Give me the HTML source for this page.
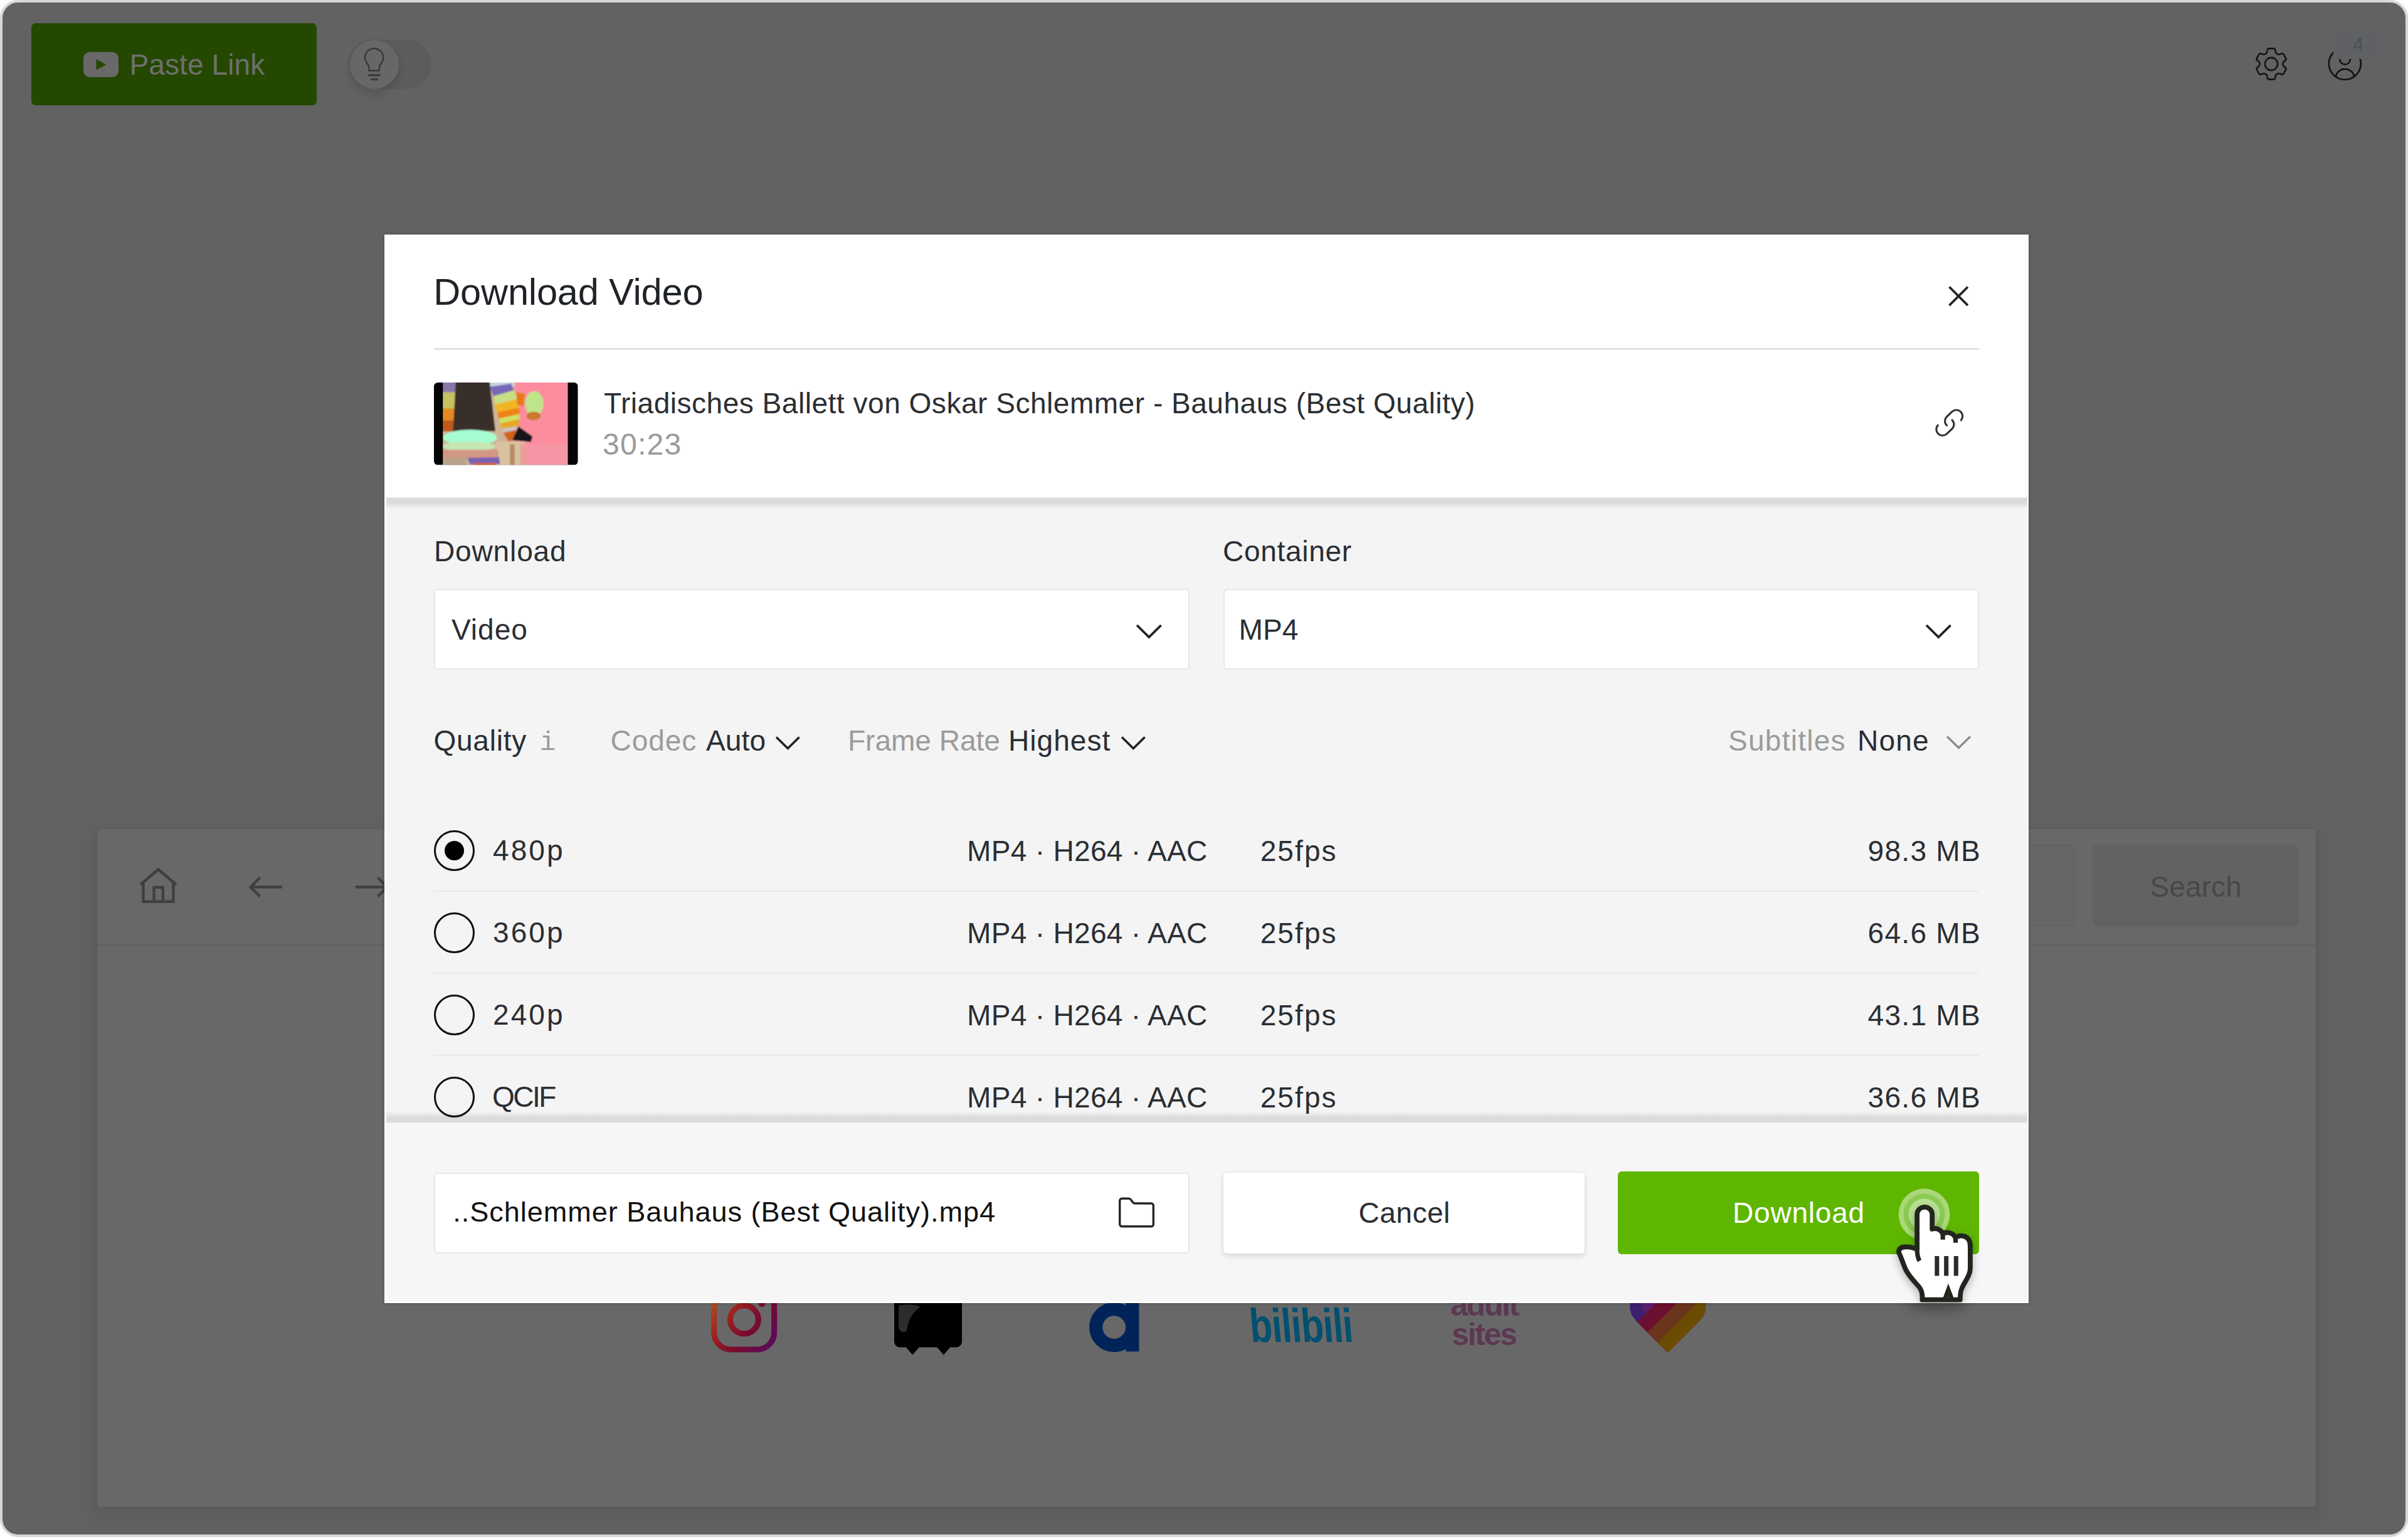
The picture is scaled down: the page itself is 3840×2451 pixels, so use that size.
<!DOCTYPE html>
<html lang="en">
<head>
<meta charset="utf-8">
<title>Download Video</title>
<style>
*{box-sizing:border-box;margin:0;padding:0}
html,body{width:3840px;height:2451px;overflow:hidden;background:#fff}
body{position:relative;font-family:"Liberation Sans",sans-serif;color:#2a2e33}
.abs{position:absolute}
.t{position:absolute;white-space:nowrap;line-height:1;font-size:46px}
svg{position:absolute;overflow:visible}
.win{position:absolute;left:0;top:0;width:3840px;height:2451px;border:4.5px solid #d7d7d7;border-radius:29px;background:#626262;overflow:hidden}
/* top bar */
.paste{position:absolute;left:49.5px;top:36.6px;width:455.5px;height:131px;border-radius:7px;background:#254800}
.track{position:absolute;left:556px;top:62.5px;width:132px;height:79px;border-radius:40px;background:#5c5c5c}
.knob{position:absolute;left:557.8px;top:63.5px;width:78px;height:78px;border-radius:50%;background:#676767;box-shadow:0 10px 10px 2px rgba(0,0,0,.075),0 0 6px rgba(0,0,0,.07)}
.badge{position:absolute;left:3721px;top:47px;width:79px;height:47px;background:#5f6165}
.badge .t{left:31px;top:8.5px;font-size:31px;color:#4a5056}
/* browser card */
.card{position:absolute;left:155px;top:1322px;width:3538px;height:1081px;border-radius:5px;background:#686868;box-shadow:0 14px 28px 6px rgba(0,0,0,.07),0 0 10px rgba(0,0,0,.05)}
.card .bar{position:absolute;left:0;top:0;width:100%;height:185.7px;border-bottom:2.6px solid #606060}
.url{position:absolute;left:2400px;top:1348px;width:908px;height:129px;border:1.6px solid #5e5e5e;border-radius:8px;background:#676767}
.search{position:absolute;left:3337px;top:1347px;width:329px;height:131px;border-radius:8px;background:#626262}
.search .t{left:91.5px;top:43.5px;font-size:46px;letter-spacing:.1px;color:#484848}

/* modal */
.modal{position:absolute;left:613px;top:374px;width:2621.5px;height:1704px;background:#fff;box-shadow:0 0 5px rgba(0,0,0,.25)}
.mbody{position:absolute;left:615.5px;top:793px;width:2617.3px;height:997px;background:#f4f4f4}
.shd{position:absolute;left:615.5px;width:2617.3px;height:18px}
.mhead{position:absolute;left:613px;top:374px;width:2621.5px;height:419px;background:#fff}
.mfoot{position:absolute;left:615.5px;top:1789.7px;width:2617.3px;height:285.7px;background:#f6f6f6}
.hr{position:absolute;left:692px;top:554.5px;width:2464px;height:3px;background:#e2e2e2}
.sel{position:absolute;top:939px;width:1205px;height:129px;border:2.5px solid #e6e6e6;border-radius:6px;background:#fff}
.g{color:#9b9b9b}
.row{position:absolute;left:692px;width:2464px;height:130.5px}
.row.ln{border-bottom:2.5px solid #e9e9e9}
.radio{position:absolute;left:0;top:32.5px;width:65px;height:65px;border-radius:50%;border:3.3px solid #111}
.radio.on:after{content:"";position:absolute;left:13.7px;top:13.7px;width:31px;height:31px;border-radius:50%;background:#000}
.fname{position:absolute;left:692px;top:1869.5px;width:1205px;height:129px;border:2.5px solid #e6e6e6;border-radius:6px;background:#fff}
.btnc{position:absolute;left:1951px;top:1870px;width:576px;height:129px;border-radius:6px;background:#fff;box-shadow:0 4px 10px rgba(0,0,0,.13),0 0 3px rgba(0,0,0,.06)}
.btnd{position:absolute;left:2579.5px;top:1868px;width:576.5px;height:132px;border-radius:6px;background:#5fb600}
</style>
</head>
<body>
<div class="win">
</div>

<header><!-- ===== top bar ===== -->
<div class="paste">
  <svg style="left:83.5px;top:46px" width="56" height="40" viewBox="0 0 56 40"><rect x="0" y="0" width="56" height="40" rx="10" fill="#696969"/><path d="M20.5,11.5 L36.5,20 L20.5,28.5Z" fill="#254800"/></svg>
</div>
<div class="t" style="left:206.5px;top:79.8px;font-size:46px;letter-spacing:.1px;color:#6e706e">Paste Link</div>
<div class="track"></div>
<div class="knob"></div>
<svg style="left:570px;top:70px" width="54" height="64" viewBox="570 70 54 64" fill="none" stroke="#3b3b3b" stroke-width="2.6" stroke-linecap="butt" stroke-linejoin="round">
  <path d="M588.25,112.6 V106.8 C588.25,102.6 581.9,99.6 581.9,92 A14.7,14.7 0 0 1 611.3,92 C611.3,99.6 604.95,102.6 604.95,106.8 V112.6 Z"/>
  <path d="M587,119.8h19.6M590.8,126.6h12.2" stroke-width="3.2"/>
</svg>
<svg style="left:3589.5px;top:70.2px" width="64" height="64" viewBox="-32 -32 64 64" fill="none" stroke="#141414" stroke-width="2.6" stroke-linejoin="round">
  <path d="M9.13,-16.00Q6.97,-17.25 6.61,-19.72L6.26,-22.13Q5.91,-24.60 3.41,-24.60L-3.41,-24.60Q-5.91,-24.60 -6.26,-22.13L-6.61,-19.72Q-6.97,-17.25 -9.13,-16.00L-9.29,-15.91Q-11.45,-14.66 -13.77,-15.58L-16.03,-16.49Q-18.35,-17.42 -19.60,-15.25L-23.01,-9.35Q-24.26,-7.19 -22.29,-5.64L-20.38,-4.14Q-18.42,-2.59 -18.42,-0.09L-18.42,0.09Q-18.42,2.59 -20.38,4.14L-22.29,5.64Q-24.26,7.19 -23.01,9.35L-19.60,15.25Q-18.35,17.42 -16.03,16.49L-13.77,15.58Q-11.45,14.66 -9.29,15.91L-9.13,16.00Q-6.97,17.25 -6.61,19.72L-6.26,22.13Q-5.91,24.60 -3.41,24.60L3.41,24.60Q5.91,24.60 6.26,22.13L6.61,19.72Q6.97,17.25 9.13,16.00L9.29,15.91Q11.45,14.66 13.77,15.58L16.03,16.49Q18.35,17.42 19.60,15.25L23.01,9.35Q24.26,7.19 22.29,5.64L20.38,4.14Q18.42,2.59 18.42,0.09L18.42,-0.09Q18.42,-2.59 20.38,-4.14L22.29,-5.64Q24.26,-7.19 23.01,-9.35L19.60,-15.25Q18.35,-17.42 16.03,-16.49L13.77,-15.58Q11.45,-14.66 9.29,-15.91Z"/>
  <circle cx="0" cy="0" r="10.1"/>
</svg>
<svg style="left:3709px;top:72px" width="60" height="60" viewBox="3709 72 60 60" fill="none" stroke="#141414" stroke-width="2.7">
  <defs><clipPath id="uc"><circle cx="3739.3" cy="101.5" r="25.5"/></clipPath></defs>
  <circle cx="3739.3" cy="101.5" r="25.5"/>
  <circle cx="3739.5" cy="94.4" r="8.4"/>
  <ellipse cx="3739.5" cy="123.5" rx="14.6" ry="13.3" clip-path="url(#uc)"/>
</svg>
<div class="badge"><div class="t">4</div></div>

</header>
<section aria-label="Browser"><!-- ===== browser card ===== -->
<div class="card"><div class="bar"></div></div>
<div class="url"></div>
<div class="search"><div class="t">Search</div></div>
<svg style="left:215px;top:1375px" width="420" height="80" viewBox="215 1375 420 80" fill="none" stroke="#3f3f3f" stroke-width="4.4" stroke-linejoin="miter">
  <path d="M224,1410.5 L252.5,1386.5 L281,1410.5"/>
  <path d="M228.5,1406.5 V1437.8 H276.5 V1406.5"/>
  <path d="M245.5,1437.8 V1415 H259.8 V1437.8"/>
  <path d="M450,1414.5 H400 M414.5,1399.5 L399.5,1414.5 L414.5,1429.5"/>
  <path d="M567,1414.5 H617 M602.5,1399.5 L617.5,1414.5 L602.5,1429.5"/>
</svg>


<!-- site logos behind the modal -->
<svg style="left:1120px;top:2040px" width="140" height="130" viewBox="1120 2040 140 130" fill="none">
  <defs><linearGradient id="ig" gradientUnits="userSpaceOnUse" x1="1132" y1="2066" x2="1240" y2="2146"><stop offset="0" stop-color="#b8561c"/><stop offset=".32" stop-color="#9c241f"/><stop offset=".62" stop-color="#7a0a2e"/><stop offset="1" stop-color="#560a62"/></linearGradient></defs>
  <rect x="1138.6" y="2056" width="96" height="96" rx="27" stroke="url(#ig)" stroke-width="9.2"/>
  <circle cx="1186.8" cy="2104.4" r="22.5" stroke="url(#ig)" stroke-width="9.2"/>
  <circle cx="1215" cy="2078.6" r="5.6" fill="#7c0c2a"/>
</svg>
<svg style="left:1420px;top:2040px" width="120" height="125" viewBox="1420 2040 120 125">
  <rect x="1426" y="2050" width="108" height="98.500" rx="9" fill="#000"/>
  <polygon points="1443.500,2147 1467,2147 1455.200,2160.500" fill="#000"/>
  <polygon points="1493,2147 1516.500,2147 1504.800,2160.500" fill="#000"/>
  <path d="M1433,2082 C1445,2079 1460,2080 1468,2084 C1452,2094 1448,2110 1446,2122 C1442,2126 1435,2124 1433,2118Z" fill="#2b2d2d"/>
</svg>
<svg style="left:1730px;top:2040px" width="95" height="125" viewBox="1730 2040 95 125">
  <circle cx="1776.6" cy="2116.6" r="29" fill="none" stroke="#00245a" stroke-width="21.2"/>
  <rect x="1795.4" y="2050" width="21" height="105.200" fill="#00245a"/>
</svg>
<div class="t" style="left:1995px;top:2075.700px;font-size:76px;font-weight:700;letter-spacing:-1px;color:#005070;transform:skewX(5deg) scaleX(.775);transform-origin:0 85%">bilibili</div>
<div class="t" style="left:2313px;top:2056px;font-size:50px;font-weight:700;letter-spacing:-2.3px;color:#5c3853">adult</div>
<div class="t" style="left:2315px;top:2102.500px;font-size:50px;font-weight:700;letter-spacing:-2.3px;color:#5c3853">sites</div>
<svg style="left:2590px;top:2040px" width="140" height="125" viewBox="2590 2040 140 125">
  <defs><clipPath id="hc"><circle cx="2630" cy="2083" r="31"/><circle cx="2689" cy="2083" r="31"/><polygon points="2659.500,2157 2711.200,2105.200 2689,2083 2659.500,2060 2630,2083 2607.800,2105.200"/></clipPath></defs>
  <g clip-path="url(#hc)">
    <rect x="2590" y="2040" width="140" height="125" fill="#3d1f6e"/>
    <polygon points="2615.500,2078 2642.500,2078 2624,2097" fill="#591e6e"/>
    <polygon points="2641,2078 2800,2078 2800,2170 2549,2170" fill="#6c1030"/>
    <polygon points="2674.300,2078 2800,2078 2800,2170 2582.300,2170" fill="#6b341c"/>
    <polygon points="2706.500,2078 2800,2078 2800,2170 2614.500,2170" fill="#6b4c00"/>
  </g>
</svg>
<!-- cursor shadow that spills below the dialog -->
<div class="abs" style="left:3040px;top:2060px;width:100px;height:30px;border-radius:50%;background:rgba(0,0,0,.3);filter:blur(9px)"></div>


</section>
<div role="dialog" aria-label="Download Video">
<div class="modal"></div>
<div class="mbody"></div>
<!-- selectors -->
<div class="t" style="left:692px;top:855.7px;letter-spacing:.86px">Download</div>
<div class="t" style="left:1950px;top:855.7px;letter-spacing:.7px">Container</div>
<div class="sel" style="left:692px"></div>
<div class="sel" style="left:1951px"></div>
<div class="t" style="left:720px;top:980.6px;letter-spacing:1px">Video</div>
<div class="t" style="left:1975.6px;top:980.6px;letter-spacing:.1px">MP4</div>
<svg style="left:1805px;top:990px" width="54" height="34" viewBox="1805 990 54 34" fill="none" stroke="#222" stroke-width="3.8"><path d="M1813,997 L1832.3,1016 L1851.6,997"/></svg>
<svg style="left:3064px;top:990px" width="54" height="34" viewBox="1805 990 54 34" fill="none" stroke="#222" stroke-width="3.8"><path d="M1813,997 L1832.3,1016 L1851.6,997"/></svg>

<!-- quality filter row -->
<div class="t" style="left:691.5px;top:1158.1px;letter-spacing:.75px">Quality</div>
<div class="t g" style="left:860.5px;top:1163px;font-family:'Liberation Mono',monospace;font-size:43px">i</div>
<div class="t g" style="left:973.6px;top:1158.1px;letter-spacing:.95px">Codec</div>
<div class="t" style="left:1126px;top:1158.1px;letter-spacing:.13px">Auto</div>
<svg style="left:1230px;top:1168px" width="54" height="34" viewBox="0 0 54 34" fill="none" stroke="#222" stroke-width="3.6"><path d="M8,7.5 L26.3,25.5 L44.6,7.5"/></svg>
<div class="t g" style="left:1352px;top:1158.1px;letter-spacing:0">Frame Rate</div>
<div class="t" style="left:1608px;top:1158.1px;letter-spacing:1.05px">Highest</div>
<svg style="left:1781px;top:1168px" width="54" height="34" viewBox="0 0 54 34" fill="none" stroke="#222" stroke-width="3.6"><path d="M8,7.5 L26.3,25.5 L44.6,7.5"/></svg>
<div class="t g" style="left:2756px;top:1158.1px;letter-spacing:1.26px">Subtitles</div>
<div class="t" style="left:2962px;top:1158.1px;letter-spacing:1.17px">None</div>
<svg style="left:3097px;top:1167px" width="54" height="34" viewBox="0 0 54 34" fill="none" stroke="#8a8a8a" stroke-width="3.2"><path d="M8,7.5 L26.5,25.5 L45,7.5"/></svg>

<!-- quality rows -->
<div class="row ln" style="top:1291.5px"><div class="radio on"></div>
  <div class="t" style="left:94px;top:41.3px;letter-spacing:3.07px">480p</div>
  <div class="t" style="left:850px;top:42.8px;letter-spacing:.33px">MP4 · H264 · AAC</div>
  <div class="t" style="left:1317.7px;top:42.8px;letter-spacing:2.1px">25fps</div>
  <div class="t" style="right:-1.7px;top:42.8px;letter-spacing:1.3px;margin-right:-1.3px">98.3 MB</div></div>
<div class="row ln" style="top:1422.5px"><div class="radio"></div>
  <div class="t" style="left:94px;top:41.3px;letter-spacing:3.07px">360p</div>
  <div class="t" style="left:850px;top:42.8px;letter-spacing:.33px">MP4 · H264 · AAC</div>
  <div class="t" style="left:1317.7px;top:42.8px;letter-spacing:2.1px">25fps</div>
  <div class="t" style="right:-1.7px;top:42.8px;letter-spacing:1.3px;margin-right:-1.3px">64.6 MB</div></div>
<div class="row ln" style="top:1553.5px"><div class="radio"></div>
  <div class="t" style="left:94px;top:41.3px;letter-spacing:3.07px">240p</div>
  <div class="t" style="left:850px;top:42.8px;letter-spacing:.33px">MP4 · H264 · AAC</div>
  <div class="t" style="left:1317.7px;top:42.8px;letter-spacing:2.1px">25fps</div>
  <div class="t" style="right:-1.7px;top:42.8px;letter-spacing:1.3px;margin-right:-1.3px">43.1 MB</div></div>
<div class="row" style="top:1684.5px"><div class="radio"></div>
  <div class="t" style="left:93px;top:41.3px;letter-spacing:-2.5px">QCIF</div>
  <div class="t" style="left:850px;top:42.8px;letter-spacing:.33px">MP4 · H264 · AAC</div>
  <div class="t" style="left:1317.7px;top:42.8px;letter-spacing:2.1px">25fps</div>
  <div class="t" style="right:-1.7px;top:42.8px;letter-spacing:1.3px;margin-right:-1.3px">36.6 MB</div></div>



<!-- header -->
<div class="shd" style="top:792.6px;background:linear-gradient(to bottom,rgba(0,0,0,.03) 0,rgba(0,0,0,.1) 12%,rgba(0,0,0,.1) 48%,rgba(0,0,0,0) 100%)"></div>
<div class="mhead"></div>
<h2 class="t" style="left:691.3px;top:436.2px;font-size:59.5px;font-weight:400;letter-spacing:-.15px;color:#1f2328">Download Video</h2>
<svg style="left:3103px;top:452px" width="40" height="40" viewBox="3103 452 40 40" fill="none" stroke="#222" stroke-width="3.8"><path d="M3108.5,457.5 L3138,487 M3138,457.5 L3108.5,487"/></svg>
<div class="hr"></div>
<svg style="left:691.7px;top:609.5px" width="229.7" height="131.5" viewBox="108 88 2127 1217" preserveAspectRatio="none">
  <defs><clipPath id="tc"><rect x="108" y="88" width="2127" height="1217" rx="58"/></clipPath>
  <clipPath id="ti"><rect x="240" y="88" width="1845" height="1217"/></clipPath>
  <filter id="tb" x="-5%" y="-5%" width="110%" height="110%"><feGaussianBlur stdDeviation="11"/></filter></defs>
  <g clip-path="url(#tc)">
    <rect x="108" y="88" width="2127" height="1217" fill="#050505"/>
    <g clip-path="url(#ti)"><g filter="url(#tb)">
      <rect x="200" y="40" width="1100" height="1320" fill="#cfb596"/>
      <rect x="1280" y="40" width="860" height="1320" fill="#fd8d9e"/>
      <rect x="1430" y="1000" width="700" height="360" fill="#f596a4"/>
      <!-- left stripes -->
      <rect x="200" y="60" width="230" height="180" fill="#8a78aa"/>
      <rect x="200" y="230" width="220" height="250" fill="#c6c262"/>
      <rect x="200" y="470" width="210" height="190" fill="#e38a22"/>
      <rect x="200" y="650" width="200" height="160" fill="#bf5a1c"/>
      <!-- top band right of dark -->
      <polygon points="930,60 1300,60 1300,150 940,150" fill="#c9d5e2"/>
      <polygon points="935,150 1250,105 1290,215 985,290" fill="#7768b6"/>
      <!-- dark trapezoid -->
      <polygon points="430,70 930,70 1015,805 390,805" fill="#372d2c"/>
      <!-- striped limb -->
      <polygon points="990,290 1300,200 1340,340 1010,420" fill="#c9df86"/>
      <polygon points="1010,410 1340,330 1370,470 1040,540" fill="#f0b428"/>
      <polygon points="1040,530 1370,460 1380,560 1070,630" fill="#ee8212"/>
      <polygon points="1070,620 1370,550 1370,640 1090,700" fill="#cfe066"/>
      <polygon points="1090,690 1370,630 1360,740 1110,790" fill="#e6a822"/>
      <polygon points="1110,770 1340,730 1310,810 1150,840" fill="#cdc3c0"/>
      <polygon points="1130,830 1320,790 1290,930 1210,960" fill="#d0621c"/>
      <polygon points="1320,230 1450,250 1430,440 1340,420" fill="#e7791c"/>
      <!-- green blob -->
      <ellipse cx="1590" cy="400" rx="135" ry="185" fill="#bfe58a"/>
      <ellipse cx="1580" cy="580" rx="105" ry="62" fill="#c9782e"/>
      <!-- shoe -->
      <polygon points="1355,735 1565,885 1540,965 1265,940" fill="#19141a"/>
      <!-- lower legs -->
      <rect x="1030" y="960" width="420" height="400" fill="#d9c2a2"/>
      <rect x="1230" y="1000" width="70" height="360" fill="#b98a62"/>
      <rect x="1380" y="1000" width="70" height="360" fill="#e8a090"/>
      <!-- mint -->
      <ellipse cx="640" cy="900" rx="400" ry="115" fill="#a6fdd1"/>
      <ellipse cx="620" cy="1030" rx="400" ry="70" fill="#c6e6b4"/>
      <rect x="200" y="1080" width="860" height="130" fill="#d39684"/>
      <polygon points="600,1200 1070,1190 1085,1290 640,1295" fill="#7a60b2"/>
      <rect x="700" y="1275" width="330" height="60" fill="#e0602e"/>
      <rect x="240" y="1200" width="350" height="120" fill="#b8a48c"/>
    </g></g>
  </g>
</svg>
<div class="t" style="left:963px;top:620px;letter-spacing:.53px;color:#2a2e33">Triadisches Ballett von Oskar Schlemmer - Bauhaus (Best Quality)</div>
<div class="t g" style="left:961px;top:685px;font-size:48px;letter-spacing:1.25px">30:23</div>
<svg style="left:3068px;top:634px" width="80" height="80" viewBox="0 0 1537 1537" fill="none" stroke="#333" stroke-width="60" stroke-linecap="round" stroke-linejoin="round"><path d="M701,854 A190,190 0 0 1 701,586 L871,426 A190,190 0 0 1 1139,694"/><path d="M865,688 A190,190 0 0 1 865,956 L695,1116 A190,190 0 0 1 427,848"/></svg>

<!-- footer -->
<div class="shd" style="top:1771.7px;background:linear-gradient(to top,rgba(0,0,0,.1) 0,rgba(0,0,0,.1) 42%,rgba(0,0,0,0) 100%)"></div>
<div class="mfoot"></div>
<div class="fname"></div>
<div class="t" style="left:722.3px;top:1910.2px;font-size:45px;letter-spacing:1px;color:#111">..Schlemmer Bauhaus (Best Quality).mp4</div>
<svg style="left:1778px;top:1902px" width="70" height="62" viewBox="1778 1902 70 62" fill="none" stroke="#262626" stroke-width="3.4" stroke-linejoin="round"><path d="M1785.7,1952.2 V1914.7 a3.5,3.5 0 0 1 3.5,-3.5 H1799.5 Q1802,1911.2 1803.3,1913 L1806.8,1917.6 Q1807.9,1919 1809.8,1919 H1835.8 a3.5,3.5 0 0 1 3.5,3.5 V1952.2 a3.5,3.5 0 0 1 -3.5,3.5 H1789.2 a3.5,3.5 0 0 1 -3.5,-3.5 z"/></svg>
<div class="btnc"></div>
<div class="t" style="left:2166.5px;top:1911px;letter-spacing:.5px">Cancel</div>
<div class="btnd"></div>
<div class="t" style="left:2763px;top:1911px;letter-spacing:.8px;color:#fff">Download</div>


<!-- click ripple + hand cursor -->
<div class="abs" style="left:2960px;top:1860px;width:280px;height:218px;overflow:hidden">
<svg style="left:0;top:0" width="280" height="240" viewBox="0 0 1793 1537">
  <circle cx="695" cy="490" r="262" fill="#fff" fill-opacity=".47"/>
  <circle cx="695" cy="490" r="212" fill="#8ccb52"/>
  <circle cx="695" cy="490" r="160" fill="#b9e094"/>
  <g style="filter:drop-shadow(0 35px 40px rgba(0,0,0,.28))">
  <path d="M622,850 L622,492 A77,77 0 0 1 776,492 L776,640 C812,626 868,640 885,692 C905,668 988,664 1015,730 C1040,696 1165,690 1165,812 L1165,1040 C1165,1100 1130,1150 1095,1210 C1070,1255 1060,1290 1062,1362 L675,1362 C680,1300 670,1262 640,1228 C600,1182 540,1122 510,1062 C480,1000 462,932 440,890 C424,850 452,826 492,823 C542,820 592,832 622,850 Z" fill="#fff" stroke="#22251e" stroke-width="50" stroke-linejoin="round"/>
  <path d="M622,840 C622,895 630,935 647,966 M885,690 V748 M1015,728 V780 M903,1366 L941,1262 L980,1366" fill="none" stroke="#22251e" stroke-width="46" stroke-linejoin="miter"/>
  <path d="M825,915 V1117 M920,915 V1117 M1020,915 V1117" fill="none" stroke="#2a2a2a" stroke-width="45"/>
  </g>
</svg>
</div>

</div>
</body>
</html>
